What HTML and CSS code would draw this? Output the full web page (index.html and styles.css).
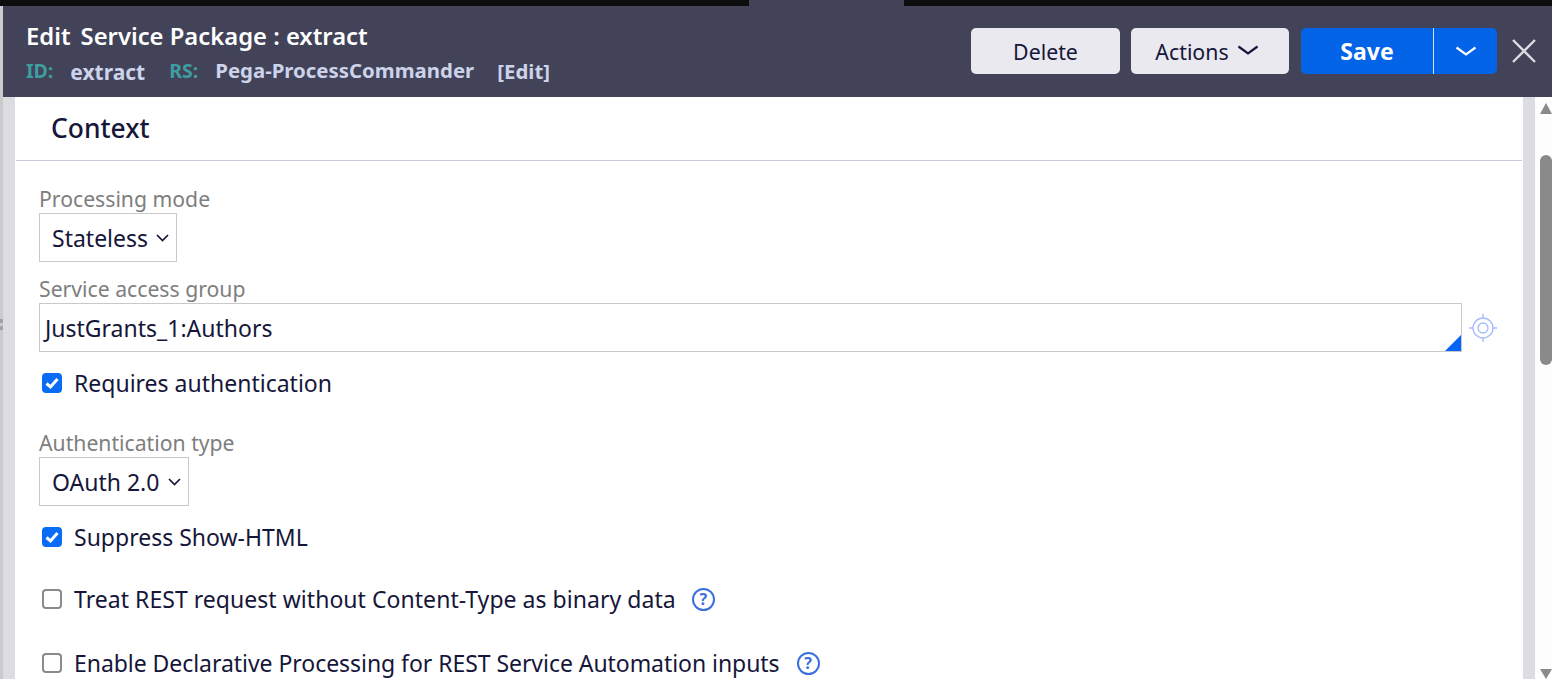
FILE: index.html
```html
<!DOCTYPE html>
<html lang="en">
<head>
<meta charset="utf-8">
<title>Edit Service Package : extract</title>
<link rel="stylesheet" href="styles.css">
</head>
<body>
<div class="page">
  <div class="edge">
    <span class="edge-top"></span>
    <span class="grip"></span>
  </div>
  <div class="main">
    <div class="topstrip"><span class="black b1"></span><span class="notch"></span><span class="black b2"></span></div>
    <header class="header">
      <div class="titles">
        <h1 class="title"><span class="t-edit">Edit</span><span>Service Package : extract</span></h1>
        <div class="meta">
          <span class="m-label m-id">ID:</span><span class="m-val m-extract">extract</span>
          <span class="m-label m-rs">RS:</span><span class="m-val m-ruleset">Pega-ProcessCommander</span>
          <span class="m-val">[Edit]</span>
        </div>
      </div>
      <div class="actions">
        <button class="btn btn-delete">Delete</button>
        <button class="btn btn-actions">Actions
          <svg class="chev" width="22" height="11" viewBox="0 0 22 11"><path d="M1.5 1.5 L11 8.5 L20.5 1.5" fill="none" stroke="#16163a" stroke-width="2.2"/></svg>
        </button>
        <div class="save-group">
          <button class="save">Save</button>
          <button class="save-menu"><svg width="22" height="11" viewBox="0 0 22 11"><path d="M1.5 1.5 L11 8.5 L20.5 1.5" fill="none" stroke="#fff" stroke-width="2.2"/></svg></button>
        </div>
        <button class="close" aria-label="Close"><svg width="26" height="26" viewBox="0 0 26 26"><path d="M2 2 L24 24 M24 2 L2 24" fill="none" stroke="#dcdde2" stroke-width="2.4"/></svg></button>
      </div>
    </header>
    <div class="body">
      <div class="gutter"></div>
      <main class="content">
        <h2 class="section">Context</h2>
        <div class="form">
          <label class="lbl lbl-1">Processing mode</label>
          <div class="select sel-state">Stateless <svg class="sel-chev" width="13" height="8" viewBox="0 0 13 8"><path d="M1 1 L6.5 6.5 L12 1" fill="none" stroke="#16163a" stroke-width="1.7"/></svg></div>
          <label class="lbl lbl-2">Service access group</label>
          <div class="field-row">
            <div class="input">JustGrants_1:Authors<span class="corner"></span></div>
            <svg class="target" width="30" height="30" viewBox="0 0 30 30"><g fill="none" stroke="#a6bcff" stroke-width="1.4"><circle cx="15" cy="15" r="10"/><circle cx="15" cy="15" r="5"/><path d="M15 1 V5 M15 25 V29 M1 15 H5 M25 15 H29"/></g></svg>
          </div>
          <div class="check c-req"><span class="box on"><svg width="20" height="20" viewBox="0 0 20 20"><path d="M4.5 10.5 L8.5 14 L15.5 6" fill="none" stroke="#fff" stroke-width="3"/></svg></span>Requires authentication</div>
          <label class="lbl lbl-3">Authentication type</label>
          <div class="select sel-auth">OAuth 2.0 <svg class="sel-chev" width="13" height="8" viewBox="0 0 13 8"><path d="M1 1 L6.5 6.5 L12 1" fill="none" stroke="#16163a" stroke-width="1.7"/></svg></div>
          <div class="check c-sup"><span class="box on"><svg width="20" height="20" viewBox="0 0 20 20"><path d="M4.5 10.5 L8.5 14 L15.5 6" fill="none" stroke="#fff" stroke-width="3"/></svg></span>Suppress Show-HTML</div>
          <div class="check c-treat"><span class="box"></span>Treat REST request without Content-Type as binary data<span class="help">?</span></div>
          <div class="check c-enable"><span class="box"></span>Enable Declarative Processing for REST Service Automation inputs<span class="help">?</span></div>
        </div>
      </main>
      <div class="gutter g-right"></div>
      <div class="scrollbar">
        <span class="arrow up"></span>
        <span class="thumb"></span>
        <span class="arrow down"></span>
      </div>
    </div>
  </div>
</div>
</body>
</html>
```

FILE: styles.css
```css
* { box-sizing: border-box; }
html, body { margin: 0; height: 100%; overflow: hidden; }
body { font-family: "Noto Sans", "Open Sans", sans-serif; color: #16163a; background: #fff; }
.page { display: flex; width: 1552px; height: 679px; overflow: hidden; }
.edge { width: 3px; flex: none; background: #cbcbcb; position: relative; }
.edge-top { position: absolute; left: 0; top: 0; width: 3px; height: 6px; background: #0d0d0d; }
.grip { position: absolute; left: 0; top: 319px; width: 3px; height: 11px; background: repeating-linear-gradient(#a2a2a2 0 4px, transparent 4px 7px); }
.main { flex: 1; display: flex; flex-direction: column; min-width: 0; }
.topstrip { display: flex; height: 6px; flex: none; background: #424258; }
.black { background: #0d0d0d; height: 6px; }
.b1 { width: 746px; }
.notch { width: 155px; }
.b2 { flex: 1; }
.header { height: 91px; flex: none; background: #424258; display: flex; justify-content: space-between; padding: 0 15px 0 23px; }
.title { margin: 14px 0 0; font-size: 23.8px; line-height: 32px; font-weight: 600; color: #fff; display: flex; gap: 10px; }
.meta { margin-top: 6px; font-size: 20.4px; line-height: 26px; font-weight: 700; color: #ccd3ea; display: flex; }
.m-label { color: #3f9da1; font-size: 19.5px; }
.m-id { margin-right: 17px; }
.m-extract { font-size: 21px; margin-right: 24px; margin-top: 1px; }
.m-rs { margin-right: 17px; }
.m-ruleset { margin-right: 23px; margin-top: -1px; }
.actions { display: flex; align-items: flex-start; padding-top: 22px; }
.btn { height: 46px; border: 0; border-radius: 5px; background: #e9e9ef; color: #16163a; font: 400 21.3px/46px "Noto Sans", sans-serif; padding: 0; }
.btn-delete { width: 149px; margin-right: 11px; padding-top: 1px; }
.btn-actions { width: 158px; margin-right: 12px; padding: 1px 6px 0 0; display: flex; align-items: center; justify-content: center; gap: 8px; }
.chev { margin-top: -2px; flex: none; }
.save-group { display: flex; width: 196px; height: 46px; background: #0364e8; border-radius: 5px; overflow: hidden; }
.save, .save-menu { border: 0; background: transparent; color: #fff; padding: 0; height: 46px; }
.save { width: 133px; font: 700 23px "Noto Sans", sans-serif; border-right: 1px solid #cfe0fb; }
.save-menu { flex: 1; display: flex; align-items: center; justify-content: center; }
.close { width: 27px; height: 46px; margin-left: 13px; border: 0; padding: 0; background: transparent; display: flex; align-items: center; justify-content: center; }
.body { flex: 1; display: flex; min-height: 0; }
.gutter { width: 12px; flex: none; background: #dcdde2; }
.content { flex: 1; min-width: 0; background: #fff; }
.section { margin: 0 1px; height: 64px; border-bottom: 1px solid #c8c9da; padding: 13px 0 0 35px; font-size: 26.4px; line-height: 36px; font-weight: 500; color: #16163a; }
.form { padding-left: 24px; font-size: 23px; }
.lbl { display: block; color: #7e7e7e; font-size: 21.2px; line-height: 28px; }
.lbl-1 { padding-top: 24px; height: 52px; }
.lbl-2 { margin-top: 13px; height: 28px; }
.lbl-3 { margin-top: 31px; height: 28px; }
.select { display: flex; align-items: center; height: 49px; border: 1px solid #c9c9c9; padding-left: 12px; line-height: 30px; white-space: pre; }
.sel-state { width: 138px; }
.sel-auth { width: 150px; }
.sel-chev { margin-left: 2px; }
.sel-auth .sel-chev { margin-left: 3px; }
.field-row { display: flex; align-items: center; margin-top: 0; }
.input { position: relative; width: 1423px; height: 49px; border: 1px solid #c9c9c9; padding: 9px 0 0 5px; line-height: 30px; }
.corner { position: absolute; right: 0; bottom: 0; width: 0; height: 0; border-style: solid; border-width: 0 0 16px 16px; border-color: transparent transparent #0364f5 transparent; }
.target { margin-left: 6px; flex: none; }
.check { display: flex; align-items: center; padding-left: 3px; line-height: 30px; height: 30px; }
.box { width: 20px; height: 20px; border: 2px solid #8a8a8a; border-radius: 4px; margin-right: 12px; flex: none; background: #fff; display: flex; align-items: center; justify-content: center; }
.box.on { background: #0a6cf5; border-color: #0a6cf5; }
.box svg { margin: -2px; flex: none; }
.c-req { margin-top: 16px; }
.c-sup { margin-top: 16px; }
.c-treat { margin-top: 32px; letter-spacing: 0.04px; }
.c-enable { margin-top: 34px; letter-spacing: -0.05px; }
.help { width: 23px; height: 23px; border: 2px solid #3b6fe0; border-radius: 50%; margin-left: 16px; color: #3b6fe0; font-size: 16px; font-weight: 700; line-height: 19px; text-align: center; flex: none; }
.c-enable .help { margin-left: 17px; }
.scrollbar { width: 17px; flex: none; background: #fdfdfd; position: relative; }
.arrow { position: absolute; right: 0; width: 0; height: 0; border-left: 6.5px solid transparent; border-right: 6.5px solid transparent; }
.up { top: 6px; border-bottom: 11px solid #8a8a8a; }
.down { bottom: 0; border-top: 10px solid #8a8a8a; }
.thumb { position: absolute; left: 5px; right: 0; top: 58px; height: 210px; background: #8a8a8a; border-radius: 6px; }
```
